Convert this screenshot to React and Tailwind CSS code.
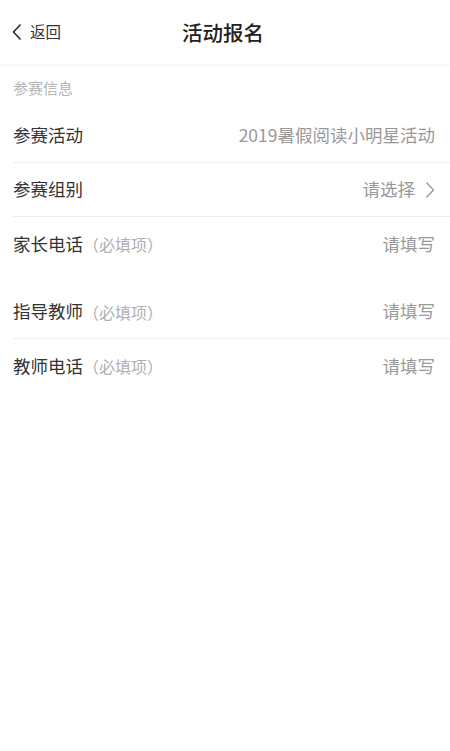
import React from 'react';

const font = { fontFamily: '"Noto Sans CJK SC", "Noto Sans", sans-serif' };

const Row = ({ label, hint, value, arrow, divider = true }) => (
  <div className="flex h-[54px] items-center pl-[13px]">
    <div className={`flex h-full flex-1 items-center justify-between pr-[15px] ${divider ? 'border-b border-[#eeeeee]' : ''}`}>
      <div className="flex items-center">
        <span className="text-[17.5px] text-[#333333]">{label}</span>
        {hint && <span className="text-[16px] text-[#b0b0b0]">（必填项）</span>}
      </div>
      <div className="flex items-center text-[17.5px] text-[#999999]">
        <span>{value}</span>
        {arrow && (
          <svg className="ml-[10px]" width="10" height="18" viewBox="0 0 10 18" fill="none">
            <path d="M1.5 1.5L8.5 9L1.5 16.5" stroke="#999999" strokeWidth="1.4" />
          </svg>
        )}
      </div>
    </div>
  </div>
);

export default function App() {
  return (
    <div className="min-h-[751px] w-[450px] bg-white" style={font}>
      <div className="relative flex h-[64px] items-center justify-center bg-white shadow-[0_1px_3px_rgba(0,0,0,0.06)]">
        <div className="absolute left-[12px] flex items-center text-[15.5px] text-[#333333]">
          <svg width="10" height="18" viewBox="0 0 10 18" fill="none">
            <path d="M8.5 1.5L1.5 9L8.5 16.5" stroke="#333333" strokeWidth="1.7" />
          </svg>
          <span className="ml-[8px]">返回</span>
        </div>
        <span className="ml-[-4px] text-[20.5px] font-medium text-[#222222]">活动报名</span>
      </div>
      <div className="flex h-[45px] items-center pl-[13px] pt-[4px] text-[15px] text-[#b5b5b5]">参赛信息</div>
      <Row label="参赛活动" value="2019暑假阅读小明星活动" />
      <Row label="参赛组别" value="请选择" arrow />
      <Row label="家长电话" hint value="请填写" divider={false} />
      <div className="h-[14px]" />
      <Row label="指导教师" hint value="请填写" />
      <Row label="教师电话" hint value="请填写" divider={false} />
    </div>
  );
}
